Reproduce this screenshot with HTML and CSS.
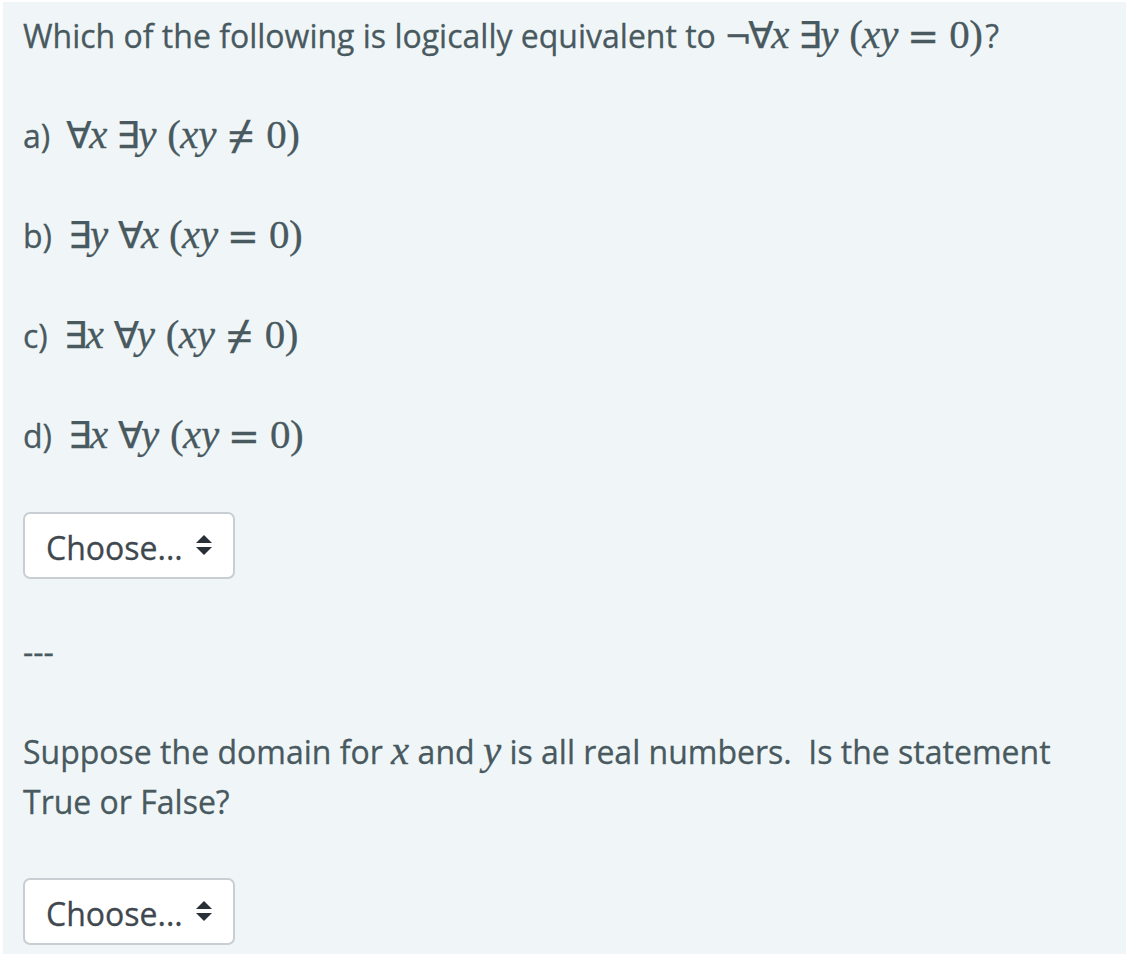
FILE: index.html
```
<!DOCTYPE html>
<html lang="en">
<head>
    <meta charset="UTF-8">
    <meta name="viewport" content="width=device-width, initial-scale=1.0">
    <title>Quiz Question</title>
    <link rel="stylesheet" href="styles.css">
</head>
<body>
    <div class="question">
        <p class="prompt">Which of the following is logically equivalent to <span class="math"><span class="not">¬</span><span class="all">∀</span><i class="x">x</i><span class="ex">∃</span><i class="y">y</i><span class="open">(</span><i class="x">x</i><i class="y">y</i><span class="rel">=</span><span class="num">0</span><span class="close">)</span></span>?</p>

        <p>a)<span class="math option"><span class="all">∀</span><i class="x">x</i><span class="ex">∃</span><i class="y">y</i><span class="open">(</span><i class="x">x</i><i class="y">y</i><span class="rel ne">≠</span><span class="num">0</span><span class="close">)</span></span></p>

        <p>b)<span class="math option"><span class="ex">∃</span><i class="y">y</i><span class="all">∀</span><i class="x">x</i><span class="open">(</span><i class="x">x</i><i class="y">y</i><span class="rel">=</span><span class="num">0</span><span class="close">)</span></span></p>

        <p>c)<span class="math option"><span class="ex">∃</span><i class="x">x</i><span class="all">∀</span><i class="y">y</i><span class="open">(</span><i class="x">x</i><i class="y">y</i><span class="rel ne">≠</span><span class="num">0</span><span class="close">)</span></span></p>

        <p>d)<span class="math option"><span class="ex">∃</span><i class="x">x</i><span class="all">∀</span><i class="y">y</i><span class="open">(</span><i class="x">x</i><i class="y">y</i><span class="rel">=</span><span class="num">0</span><span class="close">)</span></span></p>

        <div class="select" role="button" tabindex="0">
            <span>Choose...</span>
            <svg class="arrows" width="16" height="20" viewBox="0 0 16 20"><path d="M0 8L8 0l8 8zM0 12h16l-8 8z"/></svg>
        </div>

        <p>---</p>

        <p class="domain">Suppose the domain for <i class="var">x</i> and <i class="var">y</i> is all real numbers.&nbsp; Is the statement True or False?</p>

        <div class="select" role="button" tabindex="0">
            <span>Choose...</span>
            <svg class="arrows" width="16" height="20" viewBox="0 0 16 20"><path d="M0 8L8 0l8 8zM0 12h16l-8 8z"/></svg>
        </div>
    </div>
</body>
</html>
```

FILE: styles.css
```
* {
    box-sizing: border-box;
}
body {
    margin: 0;
    background-color: #fff;
    font-family: "Open Sans", sans-serif;
    font-size: 32px;
    line-height: 50px;
    color: #495960;
    -webkit-text-stroke: 0.3px;
}
.question {
    width: 1123px;
    height: 952px;
    margin: 2px 0 0 3px;
    padding: 9px 20px 0;
    background-color: #f0f6f8;
}
p {
    height: 50px;
    margin: 0 0 50px;
}
.domain {
    height: 100px;
}
.prompt {
    white-space: nowrap;
}
.math {
    font-family: "Liberation Serif", serif;
    font-size: 41px;
    line-height: 0;
    white-space: nowrap;
}
.math > * {
    display: inline-block;
}
.option {
    margin-left: 17px;
}
.not {
    width: 25px;
    font-family: "DejaVu Sans", sans-serif;
    font-size: 33px;
}
.all {
    width: 22px;
    font-family: "DejaVu Sans", sans-serif;
    font-size: 37px;
    text-indent: -1px;
}
.ex {
    width: 20px;
    font-family: "DejaVu Sans", sans-serif;
    font-size: 37px;
    text-indent: -2px;
}
.option .ex:first-child {
    margin-left: 1px;
}
.x {
    width: 18px;
}
.y {
    width: 19px;
}
.x + .ex {
    margin-left: 11px;
}
.y + .all {
    margin-left: 10px;
}
.x + .all {
    margin-left: 11px;
}
.open {
    width: 13px;
    margin-left: 10px;
}
.rel {
    width: 32px;
    margin: 0 10px 0 8px;
    font-family: "DejaVu Sans", sans-serif;
    font-size: 38px;
    transform: translateY(1px);
}
.ne {
    margin-right: 9px;
    font-family: "Noto Sans", sans-serif;
    font-size: 48px;
    text-indent: 2px;
    transform: translateY(6px) scaleY(0.84);
}
.num {
    width: 20px;
}
.close {
    width: 16px;
}
.var {
    font-family: "Liberation Serif", serif;
    font-size: 41px;
    line-height: 0;
}
.select {
    display: flex;
    align-items: center;
    width: 212px;
    height: 67px;
    margin: 51px 0 48px;
    padding: 4px 21px 0;
    border: 2px solid #c8ced3;
    border-radius: 7px;
    background-color: #fff;
    color: #40484f;
}
.arrows {
    flex-shrink: 0;
    margin: -5px 0 0 13px;
    fill: #292f36;
}
```
